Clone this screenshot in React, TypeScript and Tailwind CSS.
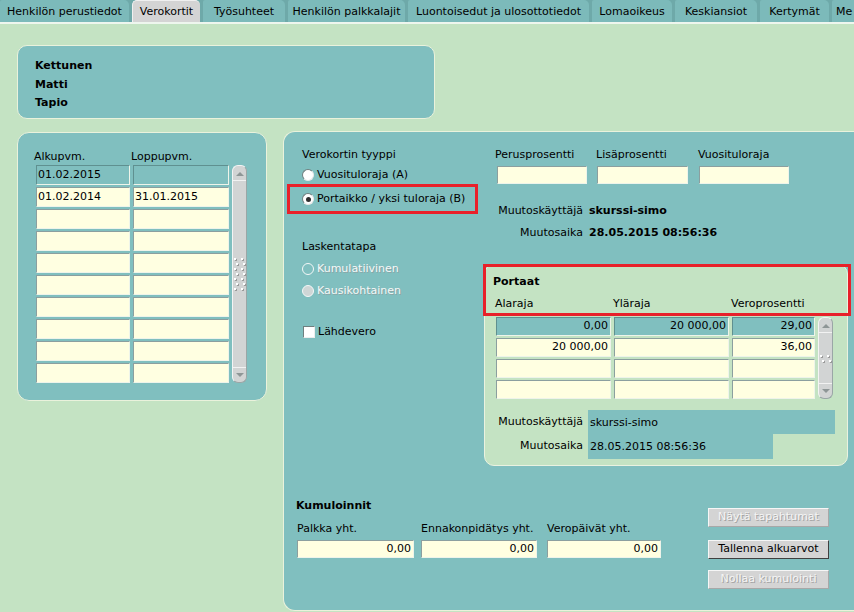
import React from 'react';

const tabs = [
  { label: 'Henkilön perustiedot', w: 'w-[129px]' },
  { label: 'Verokortit', w: 'w-[68px]', active: true },
  { label: 'Työsuhteet', w: 'w-[82px]' },
  { label: 'Henkilön palkkalajit', w: 'w-[117px]' },
  { label: 'Luontoisedut ja ulosottotiedot', w: 'w-[181px]' },
  { label: 'Lomaoikeus', w: 'w-[80px]' },
  { label: 'Keskiansiot', w: 'w-[82px]' },
  { label: 'Kertymät', w: 'w-[69px]' },
];

const dateRows = [
  ['01.02.2015', ''],
  ['01.02.2014', '31.01.2015'],
  ['', ''],
  ['', ''],
  ['', ''],
  ['', ''],
  ['', ''],
  ['', ''],
  ['', ''],
  ['', ''],
];

const stepRows = [
  ['0,00', '20 000,00', '29,00'],
  ['20 000,00', '', '36,00'],
  ['', '', ''],
  ['', '', ''],
];

type FieldProps = { value?: string; className?: string; active?: boolean; right?: boolean };

function Field({ value = '', className = '', active = false, right = false }: FieldProps) {
  return (
    <div
      className={`${className} flex shrink-0 items-center overflow-hidden whitespace-nowrap border border-b-[#eef4ea] border-r-[#eef4ea] ${
        active ? 'bg-[#80bfbf] border-t-[#5f9090] border-l-[#5f9090]' : 'bg-[#ffffe1] border-t-[#8b9f9f] border-l-[#8b9f9f]'
      } ${right ? 'justify-end pr-[2px]' : 'pl-[1px]'}`}
    >
      {value}
    </div>
  );
}

function Radio({ checked = false, disabled = false, filled = false }) {
  return (
    <span
      className={`flex h-[12px] w-[12px] shrink-0 items-center justify-center rounded-full border ${
        disabled
          ? filled
            ? 'border-[#f4f8f8] bg-[#cfd6d6]'
            : 'border-[#f4f8f8] bg-transparent'
          : 'border-t-[#6f7f7f] border-l-[#6f7f7f] border-b-[#e8e8e8] border-r-[#e8e8e8] bg-white'
      }`}
    >
      {checked && <span className="h-[5px] w-[5px] rounded-full bg-[#2e2e2e]" />}
    </span>
  );
}

function Arrow({ up }: { up?: boolean }) {
  return (
    <svg width="8" height="5" viewBox="0 0 8 5">
      <path d={up ? 'M0 5 L4 1 L8 5 Z' : 'M0 0 L4 4 L8 0 Z'} fill="#8e9696" />
    </svg>
  );
}

function Scrollbar({ className, dots }: { className: string; dots: number }) {
  return (
    <div className={`${className} flex w-[15px] shrink-0 flex-col rounded-[6px] border border-t-[#f4f4f4] border-l-[#f4f4f4] border-b-[#9aa6a6] border-r-[#9aa6a6] bg-[#d2d4d4]`}>
      <div className="flex h-[15px] items-center justify-center border-b border-[#f2f2f2]">
        <Arrow up />
      </div>
      <div className="flex flex-1 flex-col items-center justify-center gap-[3px]">
        {Array.from({ length: dots }).map((_, i) => (
          <div key={i} className={`flex gap-[5px] ${i % 2 === 1 ? 'ml-[2px]' : 'mr-[2px]'}`}>
            <span className="h-[2px] w-[2px] bg-white shadow-[1px_1px_0_#9a9a9a]" />
            <span className="h-[2px] w-[2px] bg-white shadow-[1px_1px_0_#9a9a9a]" />
          </div>
        ))}
      </div>
      <div className="flex h-[15px] items-center justify-center border-t border-[#f2f2f2]">
        <Arrow />
      </div>
    </div>
  );
}

function Button({ label, disabled = false }: { label: string; disabled?: boolean }) {
  return (
    <div
      className={`flex h-[19px] w-[121px] items-center justify-center border bg-[#d4d4d4] border-t-[#f6f6f6] border-l-[#f6f6f6] ${
        disabled
          ? 'border-b-[#a8a8a8] border-r-[#a8a8a8] text-[#f4f4f4] [text-shadow:1px_1px_0_#a2a2a2]'
          : 'border-b-[#404040] border-r-[#404040] text-black'
      }`}
    >
      {label}
    </div>
  );
}

export default function App() {
  return (
    <div className="h-[612px] w-[854px] overflow-hidden bg-[#c4e3c3] font-['DejaVu_Sans',sans-serif] text-[11px] text-black">
      {/* Tabs */}
      <div className="flex h-[24px] overflow-hidden border-b-2 border-[#eef6ee] bg-[#6ea9a9]">
        {tabs.map((t) => (
          <div
            key={t.label}
            className={`${t.w} mr-[3px] flex h-[22px] shrink-0 items-center justify-center whitespace-nowrap pt-[2px] ${
              t.active
                ? 'rounded-t-[5px] border-l border-t border-[#f0f0f0] bg-[#d4d4d4]'
                : 'rounded-tr-[5px] rounded-tl-[2px] bg-[#7cbaba]'
            }`}
          >
            {t.label}
          </div>
        ))}
        <div className="flex h-[22px] flex-1 items-center rounded-tl-[2px] bg-[#7cbaba] pl-[4px] pt-[2px]">Me</div>
      </div>

      <div className="pl-[17px] pt-[21px]">
        {/* Name panel */}
        <div className="h-[74px] w-[418px] rounded-[10px] border border-[#eaf2dc] bg-[#80bfbf] pl-[17px] pt-[11px] font-bold leading-[18.5px]">
          <div>Kettunen</div>
          <div>Matti</div>
          <div>Tapio</div>
        </div>

        <div className="mt-[12px] flex items-start">
          {/* Date list panel */}
          <div className="mt-[1px] h-[269px] w-[250px] shrink-0 rounded-[12px] border border-[#eaf2dc] bg-[#80bfbf] pl-[16px] pt-[17px]">
            <div className="flex leading-[14px]">
              <span className="w-[97px]">Alkupvm.</span>
              <span>Loppupvm.</span>
            </div>
            <div className="ml-[2px] mt-[1px] flex gap-[3px]">
              <div className="flex flex-col gap-[2px]">
                {dateRows.map((r, i) => (
                  <div key={i} className="flex gap-[3px]">
                    <Field value={r[0]} active={i === 0} className="h-[20px] w-[94px]" />
                    <Field value={r[1]} active={i === 0} className="h-[20px] w-[96px]" />
                  </div>
                ))}
              </div>
              <Scrollbar className="h-[218px]" dots={7} />
            </div>
          </div>

          {/* Main card panel */}
          <div className="ml-[16px] h-[480px] flex-1 rounded-l-[12px] border-b border-l border-t border-[#eaf2dc] bg-[#80bfbf]">
            <div className="flex items-start">
              {/* Left column */}
              <div className="w-[200px] shrink-0 pl-[18px] pt-[16px]">
                <div className="leading-[14px]">Verokortin tyyppi</div>
                <div className="mt-[5px] flex h-[16px] items-center gap-[3px]">
                  <Radio />
                  <span>Vuosituloraja (A)</span>
                </div>
                <div className="ml-[-15px] mt-[1px] flex h-[30px] w-[191px] items-center gap-[3px] border-[3px] border-[#e8202a] pl-[12px]">
                  <Radio checked />
                  <span>Portaikko / yksi tuloraja (B)</span>
                </div>
                <div className="mt-[26px] leading-[14px]">Laskentatapa</div>
                <div className="mt-[7px] flex h-[16px] items-center gap-[3px] text-[#f4f8f8] [text-shadow:1px_1px_0_#8aa6a6]">
                  <Radio disabled />
                  <span>Kumulatiivinen</span>
                </div>
                <div className="mt-[6px] flex h-[16px] items-center gap-[3px] text-[#f4f8f8] [text-shadow:1px_1px_0_#8aa6a6]">
                  <Radio disabled filled />
                  <span>Kausikohtainen</span>
                </div>
                <div className="mt-[25px] flex h-[16px] items-center gap-[3px]">
                  <span className="ml-[1px] h-[12px] w-[12px] border border-b-[#eeeeee] border-l-[#6f7f7f] border-r-[#eeeeee] border-t-[#6f7f7f] bg-white" />
                  <span>Lähdevero</span>
                </div>
              </div>

              {/* Right column */}
              <div className="w-[364px] shrink-0 pt-[16px]">
                <div className="flex">
                  <div className="ml-[13px] w-[90px]">
                    <div className="ml-[-2px] leading-[14px]">Perusprosentti</div>
                    <Field className="mt-[4px] h-[18px] w-[90px]" />
                  </div>
                  <div className="ml-[10px] w-[91px]">
                    <div className="ml-[-1px] leading-[14px]">Lisäprosentti</div>
                    <Field className="mt-[4px] h-[18px] w-[91px]" />
                  </div>
                  <div className="ml-[11px] w-[90px]">
                    <div className="ml-[-1px] leading-[14px]">Vuosituloraja</div>
                    <Field className="mt-[4px] h-[18px] w-[90px]" />
                  </div>
                </div>

                <div className="mt-[20px] flex leading-[14px]">
                  <span className="w-[99px] text-right">Muutoskäyttäjä</span>
                  <span className="ml-[6px] font-bold">skurssi-simo</span>
                </div>
                <div className="mt-[8px] flex leading-[14px]">
                  <span className="w-[99px] text-right">Muutosaika</span>
                  <span className="ml-[6px] font-bold">28.05.2015 08:56:36</span>
                </div>

                {/* Portaat */}
                <div className="relative mt-[24px] h-[202px] w-[364px] rounded-[10px] border border-[#eaf2e0] bg-[#c4e3c3] pl-[8px] pt-[10px]">
                  <div className="pointer-events-none absolute left-[-2px] top-[-1px] h-[52px] w-[368px] border-[3px] border-[#e8202a]" />
                  <div className="font-bold leading-[14px]">Portaat</div>
                  <div className="ml-[2px] mt-[8px] flex leading-[14px]">
                    <span className="w-[118px]">Alaraja</span>
                    <span className="w-[118px]">Yläraja</span>
                    <span>Veroprosentti</span>
                  </div>
                  <div className="ml-[3px] mt-[6px] flex gap-[3px]">
                    <div className="flex flex-col gap-[2px]">
                      {stepRows.map((r, i) => (
                        <div key={i} className="flex gap-[3px]">
                          <Field value={r[0]} right active={i === 0} className="h-[19px] w-[115px]" />
                          <Field value={r[1]} right active={i === 0} className="h-[19px] w-[115px]" />
                          <Field value={r[2]} right active={i === 0} className="h-[19px] w-[83px]" />
                        </div>
                      ))}
                    </div>
                    <Scrollbar className="h-[82px]" dots={2} />
                  </div>
                  <div className="mt-[11px] flex h-[24px] items-center">
                    <span className="w-[90px] text-right">Muutoskäyttäjä</span>
                    <span className="ml-[5px] flex h-[24px] w-[247px] items-center bg-[#80bfbf] pl-[2px] pt-[2px]">skurssi-simo</span>
                  </div>
                  <div className="flex h-[25px] items-center">
                    <span className="w-[90px] text-right">Muutosaika</span>
                    <span className="ml-[5px] flex h-[25px] w-[185px] items-center bg-[#80bfbf] pl-[2px] pt-[2px]">28.05.2015 08:56:36</span>
                  </div>
                </div>
              </div>
            </div>

            {/* Kumuloinnit */}
            <div className="mt-[33px] flex pl-[13px]">
              <div>
                <div className="ml-[-1px] font-bold leading-[14px]">Kumuloinnit</div>
                <div className="mt-[9px] flex">
                  <div className="w-[117px]">
                    <div className="leading-[14px]">Palkka yht.</div>
                    <Field value="0,00" right className="mt-[4px] h-[18px] w-[117px]" />
                  </div>
                  <div className="ml-[7px] w-[116px]">
                    <div className="leading-[14px]">Ennakonpidätys yht.</div>
                    <Field value="0,00" right className="mt-[4px] h-[18px] w-[116px]" />
                  </div>
                  <div className="ml-[10px] w-[114px]">
                    <div className="leading-[14px]">Veropäivät yht.</div>
                    <Field value="0,00" right className="mt-[4px] h-[18px] w-[114px]" />
                  </div>
                </div>
              </div>
              <div className="ml-[47px] flex flex-col pt-[9px]">
                <Button label="Näytä tapahtumat" disabled />
                <div className="mt-[13px]">
                  <Button label="Tallenna alkuarvot" />
                </div>
                <div className="mt-[11px]">
                  <Button label="Nollaa kumulointi" disabled />
                </div>
              </div>
            </div>
          </div>
        </div>
      </div>
    </div>
  );
}
